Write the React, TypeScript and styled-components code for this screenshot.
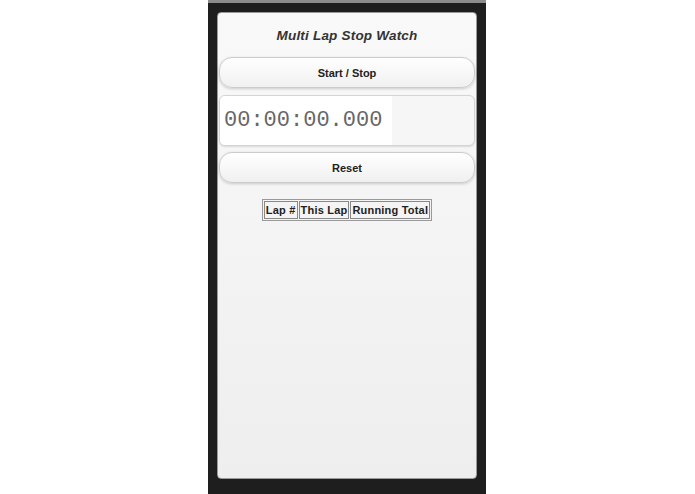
import React, { useState } from 'react';
import styled, { createGlobalStyle } from 'styled-components';

const GlobalStyle = createGlobalStyle`
  html, body {
    margin: 0;
    padding: 0;
    background: #ffffff;
    font-family: 'Liberation Sans', Arial, sans-serif;
  }
`;

const Page = styled.div`
  display: flex;
  justify-content: center;
  height: 494px;
  padding-right: 1px;
`;

const Frame = styled.div`
  width: 278px;
  height: 494px;
  box-sizing: border-box;
  background: #1e1e1e;
  border-top: 3px solid #8c8c8c;
  padding: 9px 9px 15px 9px;
  display: flex;
`;

const Screen = styled.div`
  flex: 1;
  background: linear-gradient(#f9f9f9, #eeeeee);
  border-radius: 4px;
  border: 1px solid #9a9a9a;
  display: flex;
  flex-direction: column;
  padding: 0 1px;
`;

const Title = styled.h1`
  margin: 0;
  height: 44px;
  display: flex;
  align-items: center;
  justify-content: center;
  font-size: 13.5px;
  font-style: italic;
  font-weight: bold;
  color: #333;
  letter-spacing: 0.2px;
  padding-top: 1px;
  box-sizing: border-box;
`;

const Button = styled.button<{ $gap: number }>`
  height: 31px;
  margin: 0 0 ${p => p.$gap}px 0;
  border: 1px solid #cccccc;
  border-radius: 13px;
  background: linear-gradient(#ffffff, #f0f0f0);
  box-shadow: 0 1px 3px rgba(0, 0, 0, 0.18);
  font-family: 'Liberation Sans', Arial, sans-serif;
  font-size: 11px;
  font-weight: bold;
  color: #222;
  cursor: pointer;
`;

const TimeBox = styled.div`
  height: 51px;
  box-sizing: border-box;
  margin: 0 0 6px 0;
  border: 1px solid #d4d4d4;
  border-radius: 6px;
  background: #f6f6f6;
  box-shadow: 0 1px 2px rgba(0, 0, 0, 0.12);
  display: flex;
  overflow: hidden;
`;

const TimeField = styled.div`
  width: 168px;
  background: #ffffff;
  display: flex;
  align-items: center;
  padding-left: 4px;
  font-family: 'Liberation Mono', 'Courier New', monospace;
  font-size: 22px;
  color: #666;
`;

const LapTable = styled.table`
  margin: 8px auto 0 auto;
  border: 1px solid #999;
  border-collapse: separate;
  border-spacing: 1px;
  font-size: 11px;
  font-weight: bold;
`;

const HeadCell = styled.th`
  border: 1px solid #888;
  padding: 2px 1px;
  color: #222;
  background: #f4f4f4;
  letter-spacing: 0.2px;
`;

const format = (ms: number): string => {
  const h = Math.floor(ms / 3600000);
  const m = Math.floor(ms / 60000) % 60;
  const s = Math.floor(ms / 1000) % 60;
  const pad = (n: number, l = 2) => String(n).padStart(l, '0');
  return `${pad(h)}:${pad(m)}:${pad(s)}.${pad(ms % 1000, 3)}`;
};

export default function App() {
  const [elapsed, setElapsed] = useState(0);

  return (
    <>
      <GlobalStyle />
      <Page>
        <Frame>
          <Screen>
            <Title>Multi Lap Stop Watch</Title>
            <Button $gap={7}>Start / Stop</Button>
            <TimeBox>
              <TimeField>{format(elapsed)}</TimeField>
            </TimeBox>
            <Button $gap={8} onClick={() => setElapsed(0)}>Reset</Button>
            <LapTable>
              <thead>
                <tr>
                  <HeadCell>Lap #</HeadCell>
                  <HeadCell>This Lap</HeadCell>
                  <HeadCell>Running Total</HeadCell>
                </tr>
              </thead>
            </LapTable>
          </Screen>
        </Frame>
      </Page>
    </>
  );
}
